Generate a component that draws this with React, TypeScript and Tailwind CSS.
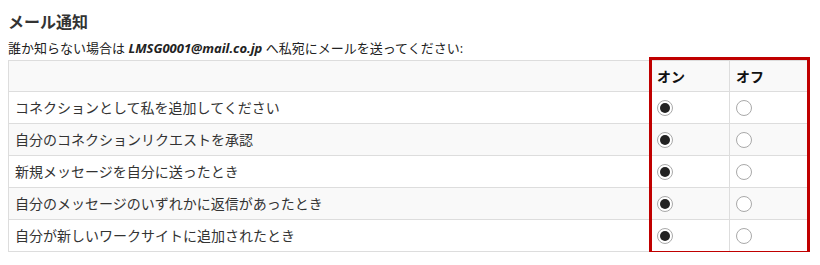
import React from "react";

const rows = [
  "コネクションとして私を追加してください",
  "自分のコネクションリクエストを承認",
  "新規メッセージを自分に送ったとき",
  "自分のメッセージのいずれかに返信があったとき",
  "自分が新しいワークサイトに追加されたとき",
];

const Radio = ({ checked }: { checked?: boolean }) => (
  <span className="flex h-[16px] w-[16px] items-center justify-center rounded-full border border-[#a9a9a9] bg-white">
    {checked ? <span className="h-[10px] w-[10px] rounded-full bg-[#222]" /> : null}
  </span>
);

export default function App() {
  return (
    <div
      className="bg-white px-2 pt-3 text-[#333]"
      style={{ fontFamily: '"Open Sans", "Noto Sans CJK JP", sans-serif' }}
    >
      <h2 className="text-[16px] font-bold leading-[20px] text-[#333]">メール通知</h2>
      <p className="mt-2 mb-1 text-[13px] leading-[16px] text-[#222]">
        誰か知らない場合は <b className="italic">LMSG0001@mail.co.jp</b> へ私宛にメールを送ってください:
      </p>
      <div className="relative w-[801px]">
        <table className="w-[801px] table-fixed border-collapse text-[14px]">
          <colgroup>
            <col className="w-[642px]" />
            <col className="w-[79px]" />
            <col className="w-[80px]" />
          </colgroup>
          <thead>
            <tr className="bg-[#f9f9f9]">
              <th className="h-[31px] border border-[#ddd]" />
              <th className="h-[31px] border border-[#ddd] px-[6px] text-left font-bold text-[#111]">オン</th>
              <th className="h-[31px] border border-[#ddd] px-[6px] text-left font-bold text-[#111]">オフ</th>
            </tr>
          </thead>
          <tbody>
            {rows.map((label, i) => (
              <tr key={i} className={i % 2 === 1 ? "bg-[#f9f9f9]" : "bg-white"}>
                <td className="h-[32px] border border-[#ddd] px-[6px] text-[#333]">{label}</td>
                <td className="h-[32px] border border-[#ddd] px-[6px]">
                  <Radio checked />
                </td>
                <td className="h-[32px] border border-[#ddd] px-[6px]">
                  <Radio />
                </td>
              </tr>
            ))}
          </tbody>
        </table>
        <div className="pointer-events-none absolute top-[-3px] left-[641px] h-[197px] w-[161px] border-[3px] border-[#c00000]" />
      </div>
    </div>
  );
}
